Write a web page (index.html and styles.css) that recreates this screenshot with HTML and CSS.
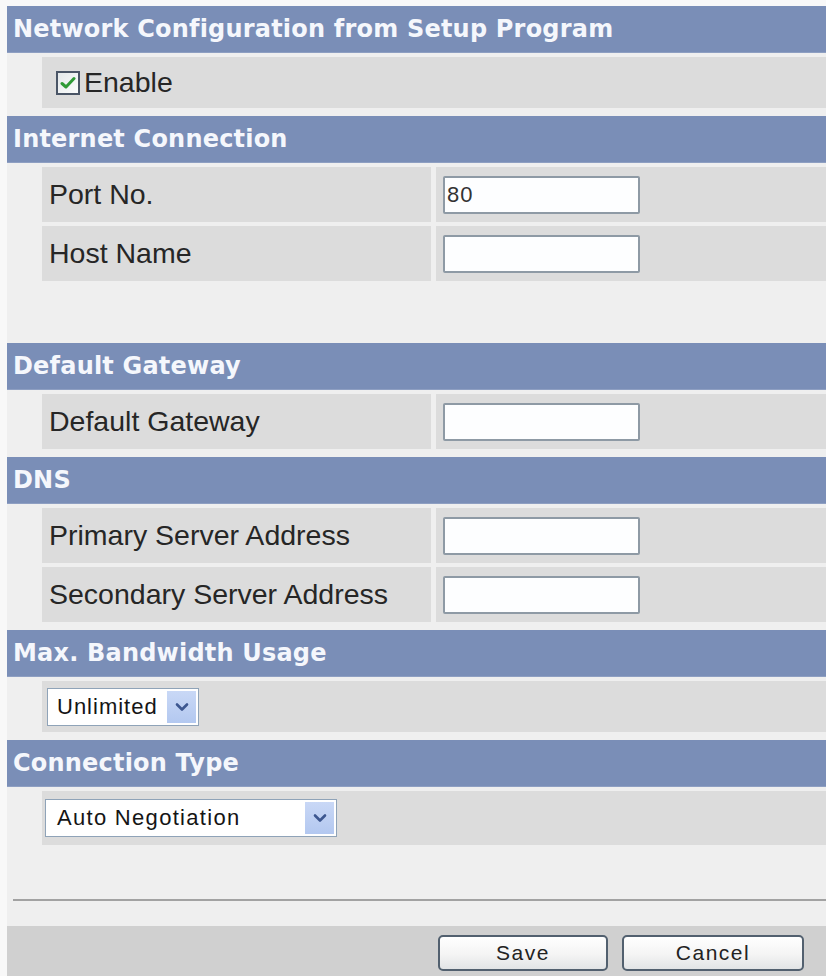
FILE: index.html
```html
<!DOCTYPE html>
<html lang="en">
<head>
<meta charset="utf-8">
<title>Network Configuration</title>
<link rel="stylesheet" href="styles.css">
</head>
<body>
<div class="page">
  <div class="hdr">Network Configuration from Setup Program</div>
  <div class="grp">
    <div class="single enable-row">
      <span class="check">
        <svg width="16" height="14" viewBox="0 0 16 14"><path d="M2 7.5 L6 11 L14 2.5" fill="none" stroke="#2f9a36" stroke-width="3" stroke-linecap="round" stroke-linejoin="round"/></svg>
      </span>
      <span class="enable-text">Enable</span>
    </div>
  </div>

  <div class="hdr">Internet Connection</div>
  <div class="grp grp-tall">
    <div class="row">
      <div class="lbl">Port No.</div>
      <div class="val"><input class="txt" type="text" value="80"></div>
    </div>
    <div class="row">
      <div class="lbl">Host Name</div>
      <div class="val"><input class="txt" type="text" value=""></div>
    </div>
  </div>

  <div class="hdr">Default Gateway</div>
  <div class="grp">
    <div class="row">
      <div class="lbl">Default Gateway</div>
      <div class="val"><input class="txt" type="text" value=""></div>
    </div>
  </div>

  <div class="hdr">DNS</div>
  <div class="grp">
    <div class="row">
      <div class="lbl">Primary Server Address</div>
      <div class="val"><input class="txt" type="text" value=""></div>
    </div>
    <div class="row">
      <div class="lbl">Secondary Server Address</div>
      <div class="val"><input class="txt" type="text" value=""></div>
    </div>
  </div>

  <div class="hdr">Max. Bandwidth Usage</div>
  <div class="grp">
    <div class="single sel-row">
      <div class="select sel-small">
        <span class="sel-text">Unlimited</span>
        <span class="sel-btn"><svg width="14" height="10" viewBox="0 0 14 10"><path d="M2 2.5 L7 7.5 L12 2.5" fill="none" stroke="#3d5790" stroke-width="2.6" stroke-linecap="round" stroke-linejoin="round"/></svg></span>
      </div>
    </div>
  </div>

  <div class="hdr">Connection Type</div>
  <div class="grp grp-last">
    <div class="single sel-row sel-row-b">
      <div class="select sel-wide">
        <span class="sel-text sel-text-b">Auto Negotiation</span>
        <span class="sel-btn"><svg width="14" height="10" viewBox="0 0 14 10"><path d="M2 2.5 L7 7.5 L12 2.5" fill="none" stroke="#3d5790" stroke-width="2.6" stroke-linecap="round" stroke-linejoin="round"/></svg></span>
      </div>
    </div>
  </div>

  <div class="rule"></div>

  <div class="footer">
    <button class="btn btn-save" type="button">Save</button>
    <button class="btn btn-cancel" type="button">Cancel</button>
  </div>
</div>
</body>
</html>
```

FILE: styles.css
```css
html, body {
  margin: 0;
  padding: 0;
}
body {
  background: #f8f8f8;
  font-family: "Liberation Sans", Arial, sans-serif;
  color: #222;
  padding: 6px 0 0 7px;
  height: 970px;
  overflow: hidden;
}
.page {
  background: #efefef;
  height: 970px;
}
.hdr {
  height: 47px;
  line-height: 47px;
  background: #7a8eb7;
  color: #f5f7fc;
  font-family: "DejaVu Sans", Verdana, sans-serif;
  font-weight: bold;
  font-size: 24px;
  letter-spacing: 0.2px;
  padding-left: 6px;
  box-sizing: border-box;
  border-bottom: 1px solid #8e9fc2;
}
.grp {
  display: flex;
  flex-direction: column;
  gap: 4px;
  padding: 4px 0 8px 35px;
}
.grp-tall {
  padding-bottom: 62px;
}
.grp-last {
  padding-bottom: 54px;
}
.row {
  display: flex;
  gap: 5px;
  height: 55px;
}
.lbl {
  width: 389px;
  flex: none;
  background: #dcdcdc;
  display: flex;
  align-items: center;
  padding-left: 7px;
  box-sizing: border-box;
  font-size: 28.5px;
  color: #262626;
}
.val {
  flex: 1;
  background: #dcdcdc;
  display: flex;
  align-items: center;
  padding-left: 7px;
}
.txt {
  width: 197px;
  height: 38px;
  box-sizing: border-box;
  border: 2px solid #8e9aa5;
  border-radius: 2px;
  background: #fdfeff;
  font-family: "Liberation Sans", Arial, sans-serif;
  font-size: 22px;
  letter-spacing: 1px;
  color: #333;
  padding: 0 0 0 2px;
  margin: 0;
  outline: none;
}
.single {
  background: #dcdcdc;
  display: flex;
  align-items: center;
  height: 51px;
}
.enable-row {
  padding-left: 14px;
}
.check {
  width: 24px;
  height: 24px;
  box-sizing: border-box;
  border: 2px solid #4a5566;
  background: linear-gradient(135deg, #e4e8ea, #fbfcfc);
  display: flex;
  align-items: center;
  justify-content: center;
}
.enable-text {
  font-size: 28.5px;
  margin-left: 4px;
  color: #262626;
}
.sel-row {
  padding-left: 5px;
}
.sel-row-b {
  height: 54px;
  padding-left: 3px;
}
.select {
  height: 38px;
  box-sizing: border-box;
  border: 1px solid #8fa3b8;
  background: #fff;
  display: flex;
  align-items: center;
  justify-content: space-between;
  padding: 2px;
}
.sel-small {
  width: 152px;
}
.sel-wide {
  width: 292px;
}
.sel-text {
  font-size: 22px;
  letter-spacing: 1px;
  color: #151515;
  padding-left: 7px;
}
.sel-text-b {
  letter-spacing: 1.3px;
  padding-left: 9px;
}
.sel-btn {
  width: 29px;
  height: 32px;
  background: linear-gradient(180deg, #c9d8f6, #b3c8f0);
  display: flex;
  align-items: center;
  justify-content: center;
}
.rule {
  height: 2px;
  background: #a2a2a2;
  margin-left: 6px;
}
.footer {
  margin-top: 25px;
  height: 50px;
  background: #d0d0d0;
  display: flex;
  justify-content: flex-end;
  align-items: flex-start;
  gap: 14px;
  padding: 9px 22px 0 0;
  box-sizing: border-box;
}
.btn {
  height: 36px;
  box-sizing: border-box;
  border: 2px solid #52606f;
  border-radius: 5px;
  background: linear-gradient(180deg, #ffffff 0%, #f4f4f4 55%, #e2e4e6 100%);
  font-family: "Liberation Sans", Arial, sans-serif;
  font-size: 21px;
  letter-spacing: 1.5px;
  color: #222;
  padding: 0;
  margin: 0;
}
.btn-save {
  width: 170px;
}
.btn-cancel {
  width: 182px;
}
```
